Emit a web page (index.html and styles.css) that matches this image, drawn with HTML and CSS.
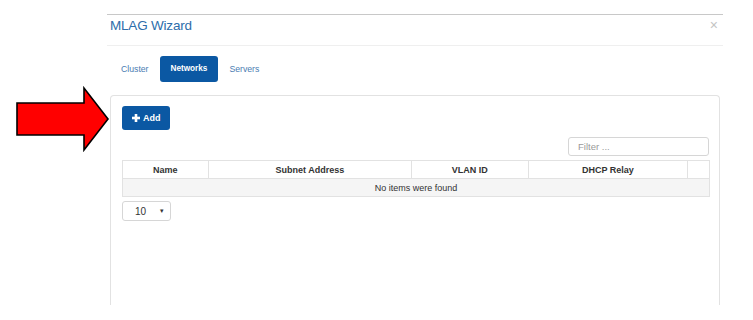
FILE: index.html
```html
<!DOCTYPE html>
<html lang="en">
<head>
    <meta charset="UTF-8">
    <title>MLAG Wizard</title>
    <link rel="stylesheet" href="styles.css">
</head>
<body>
    <svg class="callout" width="112" height="72" viewBox="0 80 112 72">
        <polygon points="17,103 84,103 84,88 108,119 84,150 84,135 17,135" fill="#ff0000" stroke="#000" stroke-width="1.6" stroke-linejoin="miter"/>
    </svg>

    <div class="modal">
        <div class="modal-header">
            <h4 class="modal-title">MLAG Wizard</h4>
            <span class="close">&times;</span>
        </div>

        <div class="modal-body">
            <ul class="tabs">
                <li class="tab">Cluster</li>
                <li class="tab active">Networks</li>
                <li class="tab">Servers</li>
            </ul>

            <div class="panel">
                <button class="btn-add">
                    <svg width="8" height="8" viewBox="0 0 8 8"><rect x="2.7" y="0" width="2.6" height="8" fill="#fff"/><rect x="0" y="2.7" width="8" height="2.6" fill="#fff"/></svg>
                    <span>Add</span>
                </button>

                <div class="filter-row">
                    <input class="filter" type="text" placeholder="Filter ...">
                </div>

                <table class="grid">
                    <thead>
                        <tr>
                            <th class="col-name">Name</th>
                            <th class="col-subnet">Subnet Address</th>
                            <th class="col-vlan">VLAN ID</th>
                            <th class="col-dhcp">DHCP Relay</th>
                            <th class="col-actions"></th>
                        </tr>
                    </thead>
                    <tbody>
                        <tr class="empty">
                            <td colspan="5">No items were found</td>
                        </tr>
                    </tbody>
                </table>

                <div class="page-size">
                    <span>10</span>
                    <span class="caret">&#9662;</span>
                </div>
            </div>
        </div>
    </div>
</body>
</html>
```

FILE: styles.css
```css
:root {
    --blue: #0b58a3;
    --title: #2d6daa;
    --link: #4a7db2;
    --text: #333333;
    --line: #e2e2e2;
    --muted: #999999;
}

body {
    margin: 0;
    padding: 0;
    background: #ffffff;
    font-family: "Liberation Sans", Arial, sans-serif;
    color: var(--text);
    position: relative;
}

.callout {
    position: absolute;
    left: 0;
    top: 80px;
    z-index: 5;
}

.modal {
    margin: 14px 0 0 107px;
    width: 616px;
    border-top: 1px solid #c8c8c8;
}

.modal-header {
    height: 31px;
    box-sizing: border-box;
    padding: 3px 3px 0;
    border-bottom: 1px solid #efefef;
    display: flex;
    align-items: flex-start;
    justify-content: space-between;
}

.modal-title {
    margin: 0;
    font-size: 13.5px;
    font-weight: normal;
    color: var(--title);
    letter-spacing: -0.2px;
}

.close {
    font-size: 14px;
    line-height: 14px;
    color: #c4c4c4;
    margin: 0 2px 0 0;
}

.modal-body {
    padding: 0 3px;
}

.tabs {
    list-style: none;
    margin: 10px 0 0;
    padding: 0;
    display: flex;
}

.tab {
    height: 26px;
    line-height: 26px;
    padding: 0 11px;
    font-size: 8.7px;
    color: var(--link);
    border-radius: 3px;
}

.tab.active {
    background: var(--blue);
    color: #ffffff;
    font-weight: bold;
    font-size: 8.2px;
    padding: 0 11px;
}

.panel {
    margin-top: 13px;
    height: 210px;
    box-sizing: border-box;
    border: 1px solid var(--line);
    border-bottom: none;
    border-radius: 4px 4px 0 0;
    padding: 10px 10px 0 11px;
}

.btn-add {
    display: flex;
    align-items: center;
    gap: 3px;
    height: 24px;
    width: 48px;
    padding: 0 0 0 10px;
    border: none;
    border-radius: 3px;
    background: var(--blue);
    color: #ffffff;
    font-family: "Liberation Sans", Arial, sans-serif;
    font-size: 9px;
    font-weight: bold;
}

.filter-row {
    display: flex;
    justify-content: flex-end;
    margin-top: 7px;
}

.filter {
    width: 141px;
    height: 19px;
    box-sizing: border-box;
    border: 1px solid #d6d6d6;
    border-radius: 3px;
    padding: 0 9px;
    font-family: "Liberation Sans", Arial, sans-serif;
    font-size: 9.5px;
}

.filter::placeholder {
    color: var(--muted);
}

.grid {
    width: 588px;
    margin-top: 4px;
    border-collapse: collapse;
    font-size: 9px;
}

.grid th {
    height: 17px;
    border: 1px solid var(--line);
    font-weight: bold;
    text-align: center;
    padding: 0;
}

.col-name { width: 85px; }
.col-subnet { width: 203px; }
.col-vlan { width: 116px; }
.col-dhcp { width: 159px; }
.col-actions { width: 21px; }

.empty td {
    height: 17px;
    border: 1px solid var(--line);
    background: #f5f5f5;
    text-align: center;
    padding: 0;
}

.page-size {
    margin-top: 4px;
    width: 49px;
    height: 20px;
    box-sizing: border-box;
    border: 1px solid #d6d6d6;
    border-radius: 3px;
    display: flex;
    align-items: center;
    justify-content: space-between;
    padding: 0 6px 0 12px;
    font-size: 10px;
}

.caret {
    font-size: 7px;
}
```
